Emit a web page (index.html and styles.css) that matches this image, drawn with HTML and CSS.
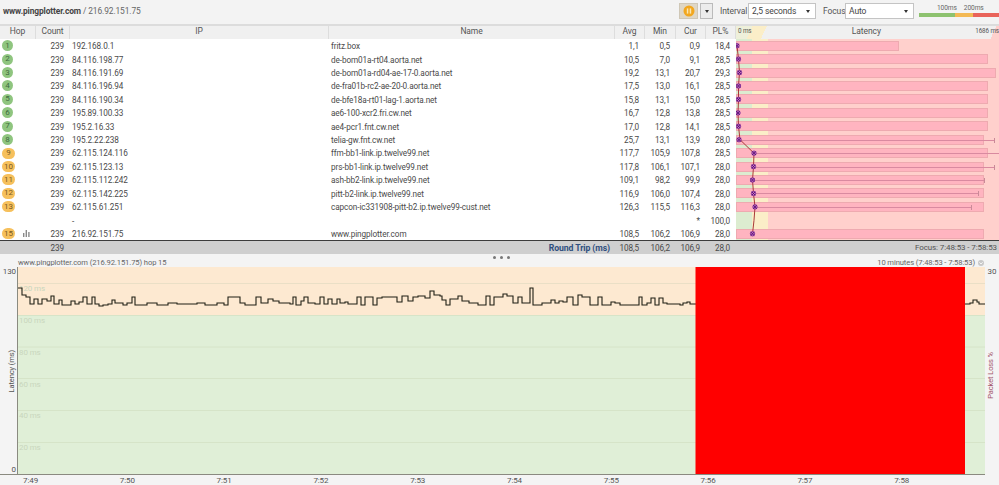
FILE: index.html
```html
<!DOCTYPE html>
<html lang="en">
<head>
<meta charset="utf-8">
<title>PingPlotter</title>
<link rel="stylesheet" href="styles.css">
</head>
<body>
<header class="toolbar">
  <div class="target"><b>www.pingplotter.com</b> / 216.92.151.75</div>
  <div class="controls">
    <div class="pause"><svg width="12" height="12" viewBox="0 0 12 12"><circle cx="6" cy="6" r="5.5" fill="#f2a71e"/><rect x="3.8" y="3.4" width="1.5" height="5.2" fill="#fbe6b0"/><rect x="6.7" y="3.4" width="1.5" height="5.2" fill="#fbe6b0"/></svg></div>
    <div class="drop"><i class="caret"></i></div>
    <span class="lbl interval-lbl">Interval</span>
    <div class="select interval"><span>2,5 seconds</span><i class="caret"></i></div>
    <span class="lbl focus-lbl">Focus</span>
    <div class="select focus"><span>Auto</span><i class="caret"></i></div>
    <div class="legend">
      <div class="legend-labels"><span>100ms</span><span>200ms</span></div>
      <div class="legend-bar"><i class="lg-g"></i><i class="lg-o"></i><i class="lg-r"></i></div>
    </div>
  </div>
</header>

<section class="table">
  <div class="row head">
    <div class="c">Hop</div><div class="c">Count</div><div class="c">IP</div><div class="c">Name</div><div class="c">Avg</div><div class="c">Min</div><div class="c">Cur</div><div class="c">PL%</div>
    <div class="lat-head"><span class="zero">0 ms</span><span class="lat-title">Latency</span><span class="max">1686 ms</span></div>
  </div>
  <div class="rows">
    <div class="row"><div class="hop"><span class="b g">1</span></div><div class="r">239</div><div class="l">192.168.0.1</div><div class="l">fritz.box</div><div class="r">1,1</div><div class="r">0,5</div><div class="r">0,9</div><div class="r">18,4</div><div class="lat"><div class="bar" style="width:163px"></div></div></div>
    <div class="row"><div class="hop"><span class="b g">2</span></div><div class="r">239</div><div class="l">84.116.198.77</div><div class="l">de-bom01a-rt04.aorta.net</div><div class="r">10,5</div><div class="r">7,0</div><div class="r">9,1</div><div class="r">28,5</div><div class="lat"><div class="bar" style="width:252px"></div></div></div>
    <div class="row"><div class="hop"><span class="b g">3</span></div><div class="r">239</div><div class="l">84.116.191.69</div><div class="l">de-bom01a-rd04-ae-17-0.aorta.net</div><div class="r">19,2</div><div class="r">13,1</div><div class="r">20,7</div><div class="r">29,3</div><div class="lat"><div class="bar" style="width:260px"></div></div></div>
    <div class="row"><div class="hop"><span class="b g">4</span></div><div class="r">239</div><div class="l">84.116.196.94</div><div class="l">de-fra01b-rc2-ae-20-0.aorta.net</div><div class="r">17,5</div><div class="r">13,0</div><div class="r">16,1</div><div class="r">28,5</div><div class="lat"><div class="bar" style="width:252px"></div></div></div>
    <div class="row"><div class="hop"><span class="b g">5</span></div><div class="r">239</div><div class="l">84.116.190.34</div><div class="l">de-bfe18a-rt01-lag-1.aorta.net</div><div class="r">15,8</div><div class="r">13,1</div><div class="r">15,0</div><div class="r">28,5</div><div class="lat"><div class="bar" style="width:252px"></div></div></div>
    <div class="row"><div class="hop"><span class="b g">6</span></div><div class="r">239</div><div class="l">195.89.100.33</div><div class="l">ae6-100-xcr2.fri.cw.net</div><div class="r">16,7</div><div class="r">12,8</div><div class="r">13,8</div><div class="r">28,5</div><div class="lat"><div class="bar" style="width:252px"></div></div></div>
    <div class="row"><div class="hop"><span class="b g">7</span></div><div class="r">239</div><div class="l">195.2.16.33</div><div class="l">ae4-pcr1.fnt.cw.net</div><div class="r">17,0</div><div class="r">12,8</div><div class="r">14,1</div><div class="r">28,5</div><div class="lat"><div class="bar" style="width:252px"></div></div></div>
    <div class="row"><div class="hop"><span class="b g">8</span></div><div class="r">239</div><div class="l">195.2.22.238</div><div class="l">telia-gw.fnt.cw.net</div><div class="r">25,7</div><div class="r">13,1</div><div class="r">13,9</div><div class="r">28,0</div><div class="lat"><div class="bar" style="width:248px"></div><div class="whisk" style="width:255px"></div></div></div>
    <div class="row"><div class="hop"><span class="b o">9</span></div><div class="r">239</div><div class="l">62.115.124.116</div><div class="l">ffm-bb1-link.ip.twelve99.net</div><div class="r">117,7</div><div class="r">105,9</div><div class="r">107,8</div><div class="r">28,5</div><div class="lat"><div class="bar" style="width:252px"></div><div class="whisk far" style="width:247px"></div></div></div>
    <div class="row"><div class="hop"><span class="b o">10</span></div><div class="r">239</div><div class="l">62.115.123.13</div><div class="l">prs-bb1-link.ip.twelve99.net</div><div class="r">117,8</div><div class="r">106,1</div><div class="r">107,1</div><div class="r">28,0</div><div class="lat"><div class="bar" style="width:248px"></div><div class="whisk far" style="width:241px"></div></div></div>
    <div class="row"><div class="hop"><span class="b o">11</span></div><div class="r">239</div><div class="l">62.115.112.242</div><div class="l">ash-bb2-link.ip.twelve99.net</div><div class="r">109,1</div><div class="r">98,2</div><div class="r">99,9</div><div class="r">28,0</div><div class="lat"><div class="bar" style="width:248px"></div><div class="whisk far" style="width:231px"></div></div></div>
    <div class="row"><div class="hop"><span class="b o">12</span></div><div class="r">239</div><div class="l">62.115.142.225</div><div class="l">pitt-b2-link.ip.twelve99.net</div><div class="r">116,9</div><div class="r">106,0</div><div class="r">107,4</div><div class="r">28,0</div><div class="lat"><div class="bar" style="width:248px"></div><div class="whisk far" style="width:225px"></div></div></div>
    <div class="row"><div class="hop"><span class="b o">13</span></div><div class="r">239</div><div class="l">62.115.61.251</div><div class="l">capcon-ic331908-pitt-b2.ip.twelve99-cust.net</div><div class="r">126,3</div><div class="r">115,5</div><div class="r">116,3</div><div class="r">28,0</div><div class="lat"><div class="bar" style="width:248px"></div><div class="whisk far" style="width:218px"></div></div></div>
    <div class="row"><div class="hop"></div><div class="r"></div><div class="l">-</div><div class="l"></div><div class="r"></div><div class="r"></div><div class="r">*</div><div class="r">100,0</div><div class="lat"></div></div>
    <div class="row"><div class="hop"><span class="b o">15</span><svg class="mini" width="7" height="7" viewBox="0 0 7 7"><path d="M0 3h1.4v4H0zM2.6 0H4v7H2.6zM5.2 2h1.4v5H5.2z" fill="#8a8a8a"/></svg></div><div class="r">239</div><div class="l">216.92.151.75</div><div class="l">www.pingplotter.com</div><div class="r">108,5</div><div class="r">106,2</div><div class="r">106,9</div><div class="r">28,0</div><div class="lat"><div class="bar" style="width:248px"></div></div></div>

    <svg class="route" viewBox="736 39 263 202" width="263" height="202">
      <defs>
        <g id="m">
          <circle r="2.2" fill="#d070c0" stroke="#7a2a96" stroke-width=".9"/>
          <path d="M-1.8-1.8 1.8 1.8M-1.8 1.8 1.8-1.8" stroke="#4a1070" stroke-width=".9"/>
        </g>
      </defs>
      <polyline points="737,45.7 738.5,59.1 739.5,72.6 738.5,86 738.5,99.4 738,112.9 738.5,126.3 740,139.7 754,153.2 753.5,166.6 752.5,180 753.5,193.5 755,206.9 754,220.3 752.5,233.8" fill="none" stroke="#a83a3a" stroke-width="1"/>
      <use href="#m" x="737" y="45.7"/><use href="#m" x="738.5" y="59.1"/><use href="#m" x="739.5" y="72.6"/><use href="#m" x="738.5" y="86"/><use href="#m" x="738.5" y="99.4"/><use href="#m" x="738" y="112.9"/><use href="#m" x="738.5" y="126.3"/><use href="#m" x="739" y="139.7"/><use href="#m" x="754" y="153.2"/><use href="#m" x="753.5" y="166.6"/><use href="#m" x="752.5" y="180"/><use href="#m" x="753.5" y="193.5"/><use href="#m" x="755" y="206.9"/><use href="#m" x="752.5" y="233.8"/>
    </svg>
  </div>
  <div class="row sum">
    <div></div><div class="r">239</div><div></div><div class="r rt">Round Trip (ms)</div><div class="r">108,5</div><div class="r">106,2</div><div class="r">106,9</div><div class="r">28,0</div><div class="r foc">Focus: 7:48:53 - 7:58:53</div>
  </div>
</section>

<section class="panel">
  <div class="title-row">
    <span>www.pingplotter.com (216.92.151.75) hop 15</span>
    <i class="grip"><i></i><i></i><i></i></i>
    <span class="range">10 minutes (7:48:53 - 7:58:53)<svg width="6" height="6" viewBox="0 0 6 6"><circle cx="3" cy="3" r="3" fill="#c9c9c9"/><path d="M1.5 2.4 3 3.9 4.5 2.4" fill="none" stroke="#fff"/></svg></span>
  </div>
  <div class="chart-row">
    <div class="axis-l"><span>130</span><span class="rot">Latency (ms)</span><span>0</span></div>
    <svg class="plot" viewBox="18 268 967 207" width="967" height="207">
      <rect x="18" y="268" width="967" height="48" fill="#fde9d1"/>
      <rect x="18" y="316" width="967" height="159" fill="#e0efd7"/>
      <g stroke="#eadfc6" stroke-width="1">
        <path d="M18 284.5H985"/>
      </g>
      <g stroke="#d6e4c8" stroke-width="1">
        <path d="M18 316.5H985M18 348H985M18 379.5H985M18 411.5H985M18 443.5H985"/>
      </g>
      <g class="gl">
        <text x="19" y="292">120 ms</text><text x="19" y="324">100 ms</text><text x="19" y="356">80 ms</text><text x="19" y="388">60 ms</text><text x="19" y="419">40 ms</text><text x="19" y="451">20 ms</text>
      </g>
      <path fill="none" stroke="#1f1f14" stroke-width="1.1" d="M18 289H22V296H26V298H30V305H34V300H38V305H42V300H47V302H51V297H54V305H59V301H62V306H71V302H75V305H79V303H83V298H87V305H92V298H95V305H99V307H103V306H108V305H112V301H115V304H123V306H127V304H132V298H135V306H147V304H157V306H168V304H177V305H197V304H205V306H217V304H224V306H228V298H240V304H245V306H256V298H261V304H268V300H273V302H279V304H290V305H293V298H296V306H301V302H304V298H308V304H315V305H320V298H324V305H328V300H332V305H337V300H340V304H345V303H348V305H357V298H361V306H365V298H373V306H377V299H382V298H397V303H402V297H408V302H413V298H418V297H425V299H430V292H434V293V296H440V297H442V301H446V306H450V300H458V297H462V302H469V304H478V306H486V297H490V306H494V298H503V295H507V297H513V304H518V298H522V304H530V289H533V306H542V304H551V301H555V304H559V302H563V303H567V298H573V306H578V296H582V298H590V306H598V298H602V306H611V303H615V304H620V306H630V306H639V298H642V306H647V304H651V299H655V306H659V299H663V304H667V305H680V306H683V304H687V303H690V305H696"/>
      <path fill="none" stroke="#1f1f14" stroke-width="1.1" d="M965 305H970V304H973V301H977V303H979V305H985"/>
      <rect x="695.5" y="268" width="269.5" height="207" fill="#ff0000"/>
    </svg>
    <div class="axis-r"><span>30</span><span class="rot loss">Packet Loss %</span><span></span></div>
  </div>
  <div class="ticks"><span>7:49</span><span>7:50</span><span>7:51</span><span>7:52</span><span>7:53</span><span>7:54</span><span>7:55</span><span>7:56</span><span>7:57</span><span>7:58</span></div>
</section>
</body>
</html>
```

FILE: styles.css
```css
* { box-sizing: border-box; }
html, body { margin: 0; padding: 0; }
body {
  width: 999px;
  height: 485px;
  overflow: hidden;
  background: #f4f4f4;
  font: 8.2px/1 Roboto, "Liberation Sans", sans-serif;
  letter-spacing: -0.1px;
  color: #4a4a4a;
}

/* toolbar */
.toolbar {
  height: 24px;
  display: flex;
  justify-content: space-between;
  align-items: center;
  background: #f3f3f3;
}
.target { padding-left: 3px; font-size: 8.4px; color: #666; margin-top: -1px; }
.target b { color: #444; }
.controls { display: flex; align-items: center; height: 100%; padding-bottom: 2px; }
.pause {
  width: 19px; height: 16px;
  background: #dfd7c6;
  border: 1px solid #cfc7b6;
  display: flex; align-items: center; justify-content: center;
}
.drop {
  width: 13px; height: 16px; margin-left: 2px;
  background: #ececec;
  border: 1px solid #bbb;
  display: flex; align-items: center; justify-content: center;
}
.caret {
  width: 0; height: 0;
  border-left: 2.5px solid transparent;
  border-right: 2.5px solid transparent;
  border-top: 3px solid #333;
}
.lbl { font-size: 8.5px; color: #555; }
.interval-lbl { margin-left: 7px; width: 28px; }
.focus-lbl { margin-left: 7px; width: 22px; }
.select {
  height: 16px;
  background: #fff;
  border: 1px solid #c4c4c4;
  display: flex; align-items: center; justify-content: space-between;
  padding: 0 5px 0 3px;
  font-size: 8.5px;
  color: #444;
}
.interval { width: 68px; }
.focus { width: 69px; }
.legend { width: 80px; margin-left: 5px; display: flex; flex-direction: column; margin-top: -1px; }
.legend-labels { display: flex; gap: 7px; padding-left: 18px; font-size: 6.6px; height: 8px; color: #666; }
.legend-bar { display: flex; height: 4px; }
.lg-g { width: 36px; background: #8dc26f; }
.lg-o { width: 18px; background: #f3b954; }
.lg-r { flex: 1; background: #e9635a; }

/* table */
.table { background: #fff; }
.row {
  display: grid;
  grid-template-columns: 36px 34px 259px 286px 30px 31px 30px 30px 263px;
  height: 13.43px;
  align-items: center;
}
.head {
  height: 15px;
  background: #f0f0f0;
  border-top: 2px solid #dcdcdc;
  align-items: stretch;
  color: #555;
}
.c {
  display: flex; align-items: center; justify-content: center;
  border-right: 1px solid #ddd;
  font-size: 8.5px;
  padding-bottom: 2px;
}
.lat-head {
  display: flex; justify-content: space-between; align-items: center;
  padding: 0 0 2px 2px;
  background: linear-gradient(115deg, #eef0da 0 15px, #fbeec8 15px 28px, #f0f0f0 28px 236px, #ffd0cc 236px);
  position: relative;
}
.zero, .max { font-size: 6.3px; white-space: nowrap; }
.lat-title { font-size: 8.5px; margin-left: 6px; }
.rows { position: relative; }
.l { padding: 1px 0 0 2px; white-space: nowrap; }
.r { text-align: right; padding: 1px 6px 0 0; white-space: nowrap; }
.hop { display: flex; align-items: center; padding-left: 2px; }
.b {
  min-width: 11px; height: 11px; padding: 0 1.5px;
  border-radius: 6px;
  display: inline-flex; align-items: center; justify-content: center;
  font-size: 8px;
  color: #5b5b45;
}
.g { background: #8fc57f; color: #3f6b3f; }
.o { background: #f6c05c; color: #7a5b22; min-width: 13px; }
.mini { margin-left: 8px; }
.lat {
  height: 100%;
  position: relative;
  display: flex; align-items: center;
  background: linear-gradient(90deg, #dcecd0 0 16px, #fbeec8 16px 32px, #ffd0cc 32px);
}
.bar {
  height: 10px;
  background: #ffb4c0;
  border: 1px solid #eeaab0;
}
.whisk {
  position: absolute;
  left: 4px; top: 50%;
  height: 1px;
  background: #d98aa0;
}
.whisk.far { left: 18px; }
.whisk::after {
  content: "";
  position: absolute;
  right: 0; top: -2px;
  width: 1px; height: 5px;
  background: #c98a98;
}
.route { position: absolute; left: 736px; top: 0; }

.sum {
  height: 14px;
  background: #cfcfcf;
  border-top: 1px solid #3c3c3c;
}
.rt { font-weight: 700; color: #2f4f7f; padding-right: 5px; font-size: 8.7px; }
.foc { padding-right: 2px; font-size: 8px; color: #555; }

/* lower panel */
.title-row {
  height: 13px;
  display: flex; justify-content: space-between; align-items: flex-end;
  padding: 0 15px 1px 18px;
  font-size: 7.6px;
  color: #666;
  position: relative;
}
.grip { position: absolute; left: 493px; top: 2px; display: flex; gap: 4px; }
.grip i { width: 3px; height: 3px; border-radius: 50%; background: #777; }
.range { display: flex; align-items: center; gap: 3px; }
.chart-row {
  display: grid;
  grid-template-columns: 18px 967px 14px;
  height: 207px;
}
.axis-l, .axis-r {
  display: flex; flex-direction: column; justify-content: space-between; align-items: center;
  height: 100%;
  padding: 1px 0 0;
  font-size: 8px;
  color: #555;
}
.axis-l { align-items: flex-end; padding-right: 1px; border-right: 1px solid #8a8a80; }
.axis-l .rot { margin-right: 1px; }
.rot { writing-mode: vertical-rl; transform: rotate(180deg); font-size: 7.5px; }
.axis-r .rot { margin-right: 2px; }
.loss { color: #a4566c; }
.plot { display: block; }
.gl text { font-size: 8px; fill: #c9d6bd; }
.ticks {
  display: flex;
  padding: 2px 0 0 23px;
  height: 11px;
  border-top: 1px solid #8a8a80;
  margin-right: 14px;
  font-size: 8px;
  color: #555;
}
.ticks span { width: 96.8px; flex: none; }
```
